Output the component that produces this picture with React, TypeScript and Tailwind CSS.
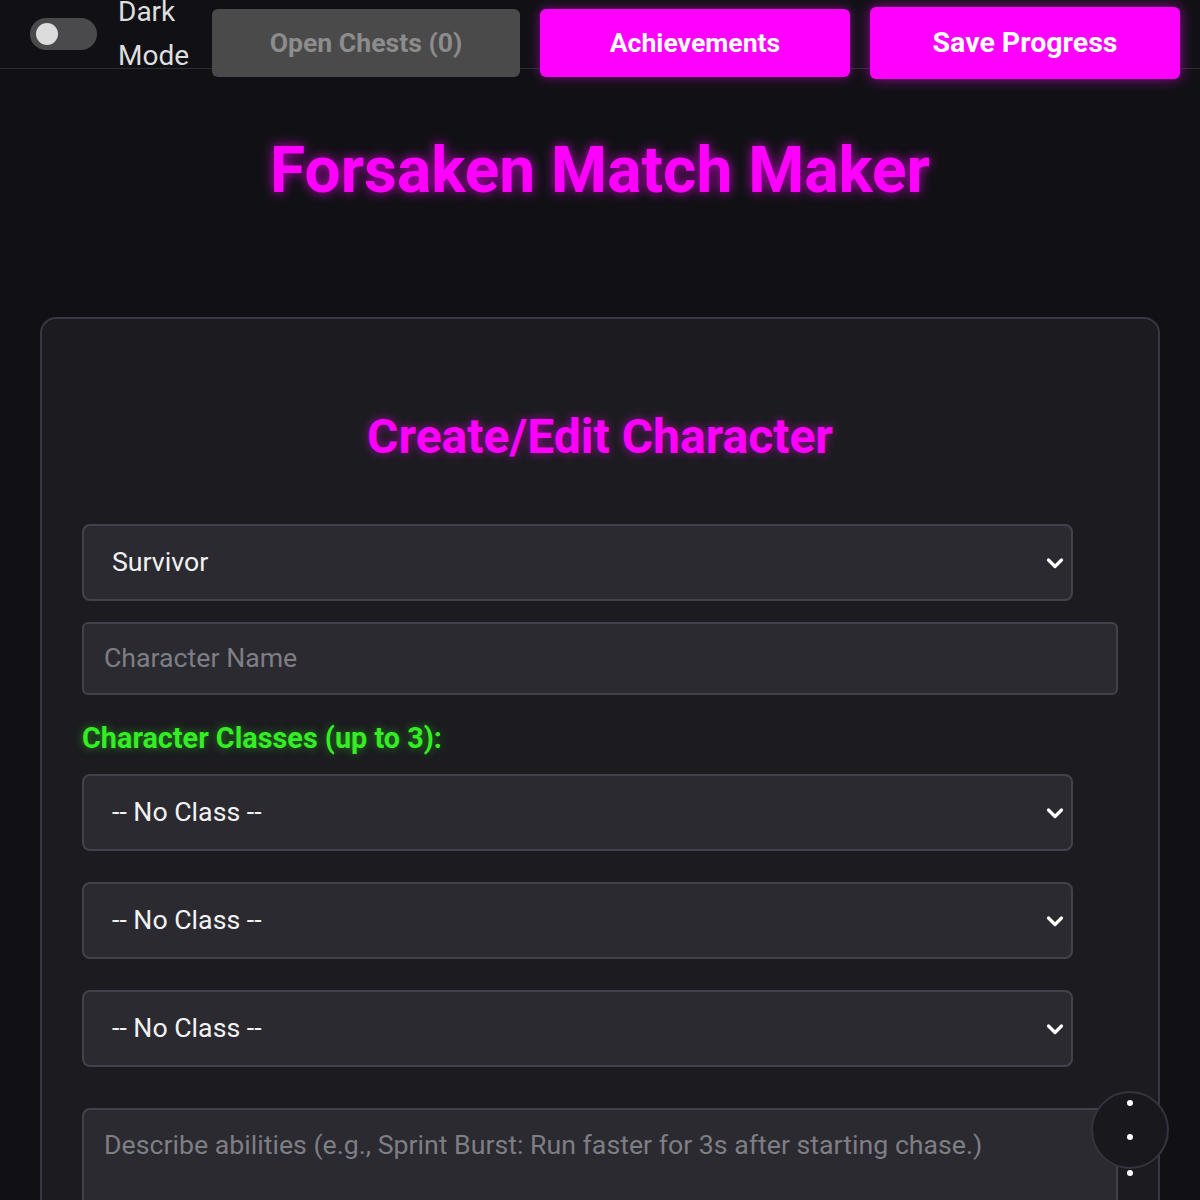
import { useState } from 'react';

function Chevron() {
  return (
    <svg width="20" height="20" viewBox="0 0 20 20" className="absolute right-[6px] top-1/2 -translate-y-1/2 pointer-events-none">
      <path d="M3.5 7 L10 13.5 L16.5 7" fill="none" stroke="#ffffff" strokeWidth="3.2" strokeLinecap="round" strokeLinejoin="round" />
    </svg>
  );
}

function FakeSelect({ value }: { value: string }) {
  return (
    <div className="relative w-[991px] h-[77px] rounded-[8px] border-2 border-[#42424c] bg-[#2a2a30] flex items-center pl-[28px] text-[26.7px] text-[#f2f2f2]">
      {value}
      <Chevron />
    </div>
  );
}

export default function App() {
  const [dark, setDark] = useState(false);

  return (
    <div className="relative h-[1200px] overflow-hidden bg-[#111115] font-['Roboto','Liberation_Sans',sans-serif]">
      {/* Top bar */}
      <header className="h-[69px] border-b border-[#2c2c36] flex items-center pl-[30px]">
        <button
          onClick={() => setDark(!dark)}
          className="w-[67px] h-[32px] rounded-full bg-[#4a4a4c] flex items-center px-[6px] shrink-0"
        >
          <span className="w-[22px] h-[22px] rounded-full bg-[#dcdcdc]" />
        </button>
        <div className="ml-[21px] text-[28px] leading-[44px] text-[#dedede] w-[73px]">Dark Mode</div>
        <div className="flex gap-[20px] ml-[21px] mt-[20px]">
          <button className="w-[308px] h-[68px] rounded-[6px] bg-[#4a4a4a] text-[#8c8c8c] text-[26.6px] font-bold">
            Open Chests (0)
          </button>
          <button className="w-[310px] h-[68px] rounded-[6px] bg-[#ff00ff] text-white text-[26.6px] font-bold shadow-[0_0_12px_rgba(255,0,255,0.45)]">
            Achievements
          </button>
          <button className="w-[310px] h-[72px] -mt-[2px] rounded-[6px] bg-[#ff00ff] text-white text-[28.5px] font-bold shadow-[0_0_14px_rgba(255,0,255,0.55)]">
            Save Progress
          </button>
        </div>
      </header>

      {/* Title */}
      <h1 className="mt-[62px] text-center text-[64px] leading-[80px] font-bold text-[#ff00ff] [text-shadow:0_0_12px_rgba(255,0,255,0.75)]">
        Forsaken Match Maker
      </h1>

      {/* Card */}
      <div className="mx-[40px] mt-[106px] rounded-[16px] border-2 border-[#383844] bg-[#1c1c20] px-[40px] pt-[88px] pb-[60px]">
        <h2 className="text-center text-[48px] leading-[60px] font-bold text-[#ff00ff] [text-shadow:0_0_10px_rgba(255,0,255,0.55)]">
          Create/Edit Character
        </h2>

        <div className="mt-[57px]">
          <FakeSelect value="Survivor" />
        </div>

        <div className="mt-[21px] h-[73px] rounded-[6px] border-2 border-[#42424c] bg-[#2a2a30] flex items-center pl-[20px] text-[26.7px] text-[#7e7e84]">
          Character Name
        </div>

        <div className="mt-[25px] text-[28.8px] leading-[36px] font-bold text-[#33ee22] [text-shadow:0_0_8px_rgba(51,238,34,0.5)]">
          Character Classes (up to 3):
        </div>

        <div className="mt-[18px] flex flex-col gap-[31px]">
          <FakeSelect value="-- No Class --" />
          <FakeSelect value="-- No Class --" />
          <FakeSelect value="-- No Class --" />
        </div>

        <div className="mt-[41px] h-[160px] rounded-[8px] border-2 border-[#42424c] bg-[#2a2a30] pl-[20px] pt-[18px] text-[26.7px] leading-[34px] text-[#7e7e84]">
          Describe abilities (e.g., Sprint Burst: Run faster for 3s after starting chase.)
        </div>
      </div>

      {/* Floating menu button */}
      <div className="absolute left-[1091px] top-[1091px] w-[78px] h-[78px] rounded-full border-2 border-[#34343e] bg-[#19191d]" />
      <span className="absolute left-[1127px] top-[1100px] w-[6px] h-[6px] rounded-full bg-white" />
      <span className="absolute left-[1127px] top-[1134px] w-[6px] h-[6px] rounded-full bg-white" />
      <span className="absolute left-[1127px] top-[1170px] w-[6px] h-[6px] rounded-full bg-white" />
    </div>
  );
}
